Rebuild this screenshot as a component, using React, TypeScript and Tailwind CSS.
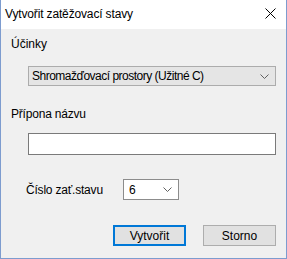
export default function App() {
  return (
    <div className="w-[287px] h-[259px] flex flex-col bg-[#f0f0f0] border-x border-b border-[#7d9ccf] text-[12px] leading-[16px] text-black font-['Liberation_Sans',sans-serif]">
      {/* title bar */}
      <div className="h-[29px] shrink-0 bg-white flex items-center justify-between pl-[4px] pr-[10px]">
        <span className="-mt-[2px] tracking-[-0.15px]">Vytvořit zatěžovací stavy</span>
        <svg width="11" height="11" viewBox="0 0 11 11" className="-mt-[2px]">
          <path d="M0.5 0.5 L10.5 10.5 M10.5 0.5 L0.5 10.5" stroke="#000" strokeWidth="1" />
        </svg>
      </div>

      <div className="flex flex-col pl-[10px] pr-[10px]">
        <div className="mt-[7px]">Účinky</div>

        <div className="mt-[14px] ml-[17px] h-[20px] flex items-center justify-between bg-[#e5e5e5] border border-[#acacac] pl-[3px] pr-[6px]">
          <span className="tracking-[-0.5px]">Shromažďovací prostory (Užitné C)</span>
          <Chevron />
        </div>

        <div className="mt-[20px] tracking-[-0.2px]">Přípona názvu</div>

        <div className="mt-[11px] ml-[17px] h-[22px] bg-white border border-[#7a7a7a]" />

        <div className="mt-[24px] ml-[15px] flex items-center">
          <span className="w-[97px] tracking-[-0.2px]">Číslo zať.stavu</span>
          <div className="w-[56px] h-[21px] flex items-center justify-between bg-white border border-[#8c8c8c] pl-[5px] pr-[6px]">
            <span>6</span>
            <Chevron />
          </div>
        </div>

        <div className="mt-[25px] flex justify-end gap-[17px]">
          <button className="w-[73px] h-[21px] bg-[#e1e1e1] border-2 border-[#0078d7] flex items-center justify-center">
            Vytvořit
          </button>
          <button className="w-[73px] h-[21px] bg-[#e1e1e1] border border-[#adadad] flex items-center justify-center">
            Storno
          </button>
        </div>
      </div>
    </div>
  );
}

function Chevron() {
  return (
    <svg width="9" height="5" viewBox="0 0 9 5">
      <polyline points="0.5,0.5 4.5,4.5 8.5,0.5" fill="none" stroke="#606060" strokeWidth="1" />
    </svg>
  );
}
